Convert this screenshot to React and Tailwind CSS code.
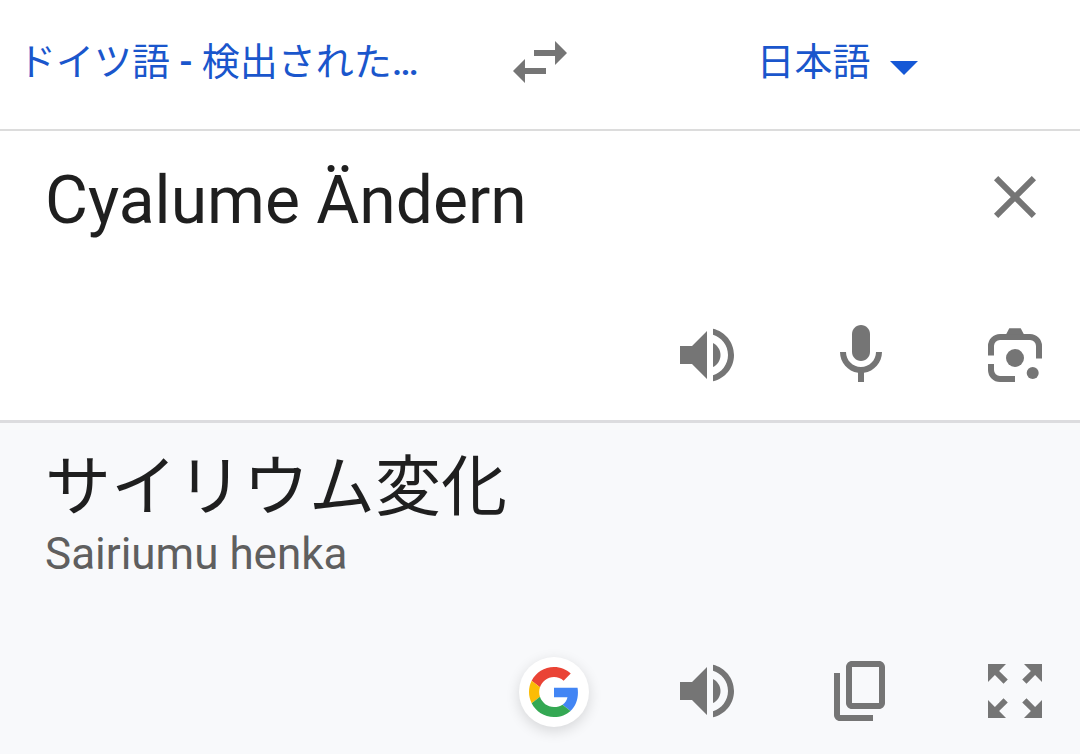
import { useState } from 'react';

function Icon({ children }) {
  return (
    <svg viewBox="0 0 24 24" className="block size-[72px]" fill="currentColor" aria-hidden="true">
      {children}
    </svg>
  );
}

function IconButton({ label, children, onClick }) {
  return (
    <button type="button" aria-label={label} onClick={onClick} className="block shrink-0 text-[#757575]">
      <Icon>{children}</Icon>
    </button>
  );
}

function SpeakerPaths() {
  return (
    <>
      <path d="M3 9v6h4l5 5V4L7 9H3z" />
      <path d="M14 7.97v8.05c1.48-.73 2.5-2.25 2.5-4.02 0-1.77-1.02-3.29-2.5-4.03z" />
      <path d="M14 3.23v2.06c2.89.86 5 3.54 5 6.71s-2.11 5.85-5 6.71v2.06c4.01-.91 7-4.49 7-8.77s-2.99-7.86-7-8.77z" />
    </>
  );
}

function GoogleLogo() {
  return (
    <svg viewBox="0 0 48 48" className="size-[50px]" aria-hidden="true">
      <path fill="#EA4335" d="M24 9.5c3.54 0 6.71 1.22 9.21 3.6l6.85-6.85C35.9 2.38 30.47 0 24 0 14.62 0 6.51 5.38 2.56 13.22l7.98 6.19C12.43 13.72 17.74 9.5 24 9.5z" />
      <path fill="#4285F4" d="M46.98 24.55c0-1.57-.15-3.09-.38-4.55H24v9.02h12.94c-.58 2.96-2.26 5.48-4.78 7.18l7.73 6c4.51-4.18 7.09-10.36 7.09-17.65z" />
      <path fill="#FBBC05" d="M10.53 28.59c-.48-1.45-.76-2.99-.76-4.59s.27-3.14.76-4.59l-7.98-6.19C.92 16.46 0 20.12 0 24c0 3.88.92 7.54 2.56 10.78l7.97-6.19z" />
      <path fill="#34A853" d="M24 48c6.48 0 11.93-2.13 15.89-5.81l-7.73-6c-2.15 1.45-4.92 2.3-8.16 2.3-6.26 0-11.57-4.22-13.47-9.91l-7.98 6.19C6.51 42.62 14.62 48 24 48z" />
    </svg>
  );
}

function LanguageBar() {
  return (
    <header className="flex items-center border-b-2 border-[#dcdcdc] pt-[26px] pb-[31px] text-[38px] leading-[52px] text-[#1a56cc]">
      <div className="min-w-0 flex-1">
        <button type="button" className="ml-[18px] block max-w-full truncate text-left">
          ドイツ語<span className="font-medium"> - </span>検出された<span className="font-medium">…</span>
        </button>
      </div>
      <div className="px-[18px]">
        <IconButton label="言語を入れ替える">
          <path d="M6.99 11L3 15l3.99 4v-3H14v-2H6.99v-3zM21 9l-3.99-4v3H10v2h7.01v3L21 9z" />
        </IconButton>
      </div>
      <div className="flex min-w-0 flex-1 items-center justify-center gap-[18px]">
        <select aria-label="翻訳先の言語" className="h-[52px] appearance-none bg-transparent">
          <option>日本語</option>
        </select>
        <svg viewBox="0 0 28 14" className="mt-3 w-7" fill="#1558d6" aria-hidden="true">
          <path d="M0 0h28L14 14z" />
        </svg>
      </div>
    </header>
  );
}

function SourcePanel() {
  const [text, setText] = useState('Cyalume Ändern');

  return (
    <section className="border-b-3 border-[#dcdcdf] pt-[30px] pr-[29px] pb-[29px] pl-[45px]">
      <div className="flex items-start">
        <textarea
          aria-label="原文"
          rows={1}
          spellCheck={false}
          value={text}
          onChange={(e) => setText(e.target.value)}
          className="block h-20 min-w-0 flex-1 resize-none overflow-hidden text-[66px] leading-[80px] outline-none"
        />
        <IconButton label="クリア" onClick={() => setText('')}>
          <path d="M5.7 5.7l12.6 12.6M18.3 5.7L5.7 18.3" fill="none" stroke="currentColor" strokeWidth="2" />
        </IconButton>
      </div>
      <div className="mt-[78px] flex justify-end gap-[82px]">
        <IconButton label="原文を聞く">
          <SpeakerPaths />
        </IconButton>
        <IconButton label="音声入力">
          <path d="M12 14c1.66 0 3-1.34 3-3V5c0-1.66-1.34-3-3-3S9 3.34 9 5v6c0 1.66 1.34 3 3 3z" />
          <path d="M17 11c0 2.76-2.24 5-5 5s-5-2.24-5-5H5c0 3.53 2.61 6.43 6 6.92V21h2v-3.08c3.39-.49 6-3.39 6-6.92h-2z" />
        </IconButton>
        <IconButton label="カメラで翻訳">
          <path
            d="M4 12.2V9a3 3 0 0 1 3-3h10a3 3 0 0 1 3 3v4.2M4 15v2a3 3 0 0 0 3 3h5"
            fill="none"
            stroke="currentColor"
            strokeWidth="2"
          />
          <path d="M9 5.2l1.1-2.1h3.8L15 5.2z" />
          <circle cx="12" cy="13" r="3" />
          <circle cx="17.9" cy="18" r="2" />
        </IconButton>
      </div>
    </section>
  );
}

function ResultPanel() {
  return (
    <section className="flex-1 bg-[#f8f9fb] pt-[25px] pr-[29px] pb-[26px] pl-[45px]">
      <p className="text-[66px] leading-[80px]">サイリウム変化</p>
      <p className="text-[44px] leading-[52px] text-[#5f5f5f]">Sairiumu henka</p>
      <div className="mt-[75px] flex items-end justify-end gap-[82px]">
        <a
          href="#search"
          aria-label="Google で検索"
          className="flex size-[70px] items-center justify-center rounded-full bg-white shadow-[0_4px_14px_rgba(0,0,0,0.14)]"
        >
          <GoogleLogo />
        </a>
        <IconButton label="訳文を聞く">
          <SpeakerPaths />
        </IconButton>
        <IconButton label="コピー">
          <path d="M18 2H9c-1.1 0-2 .9-2 2v12c0 1.1.9 2 2 2h9c1.1 0 2-.9 2-2V4c0-1.1-.9-2-2-2zm0 14H9V4h9v12z" />
          <path d="M3 6v14c0 1.1.9 2 2 2h11v-2H5V6H3z" />
        </IconButton>
        <IconButton label="全画面表示">
          <path d="M15 3l2.3 2.3-2.89 2.87 1.42 1.42L18.7 6.7 21 9V3zM3 9l2.3-2.3 2.87 2.89 1.42-1.42L6.7 5.3 9 3H3zM9 21l-2.3-2.3 2.89-2.87-1.42-1.42L5.3 17.3 3 15v6zM21 15l-2.3 2.3-2.87-2.89-1.42 1.42 2.89 2.87L15 21h6z" />
        </IconButton>
      </div>
    </section>
  );
}

export default function App() {
  return (
    <main
      lang="ja"
      className="flex min-h-screen flex-col bg-white font-[Roboto,'Noto_Sans_CJK_JP',sans-serif] text-[#1f1f1f]"
    >
      <LanguageBar />
      <SourcePanel />
      <ResultPanel />
    </main>
  );
}
